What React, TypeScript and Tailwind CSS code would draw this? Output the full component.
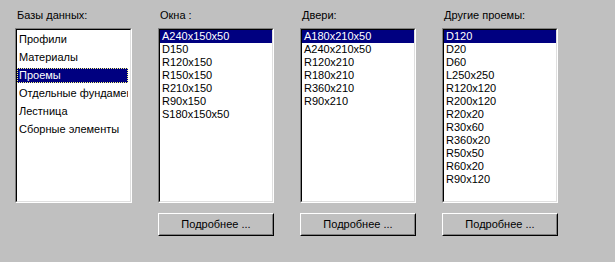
const databases = [
  "Профили",
  "Материалы",
  "Проемы",
  "Отдельные фундаменты",
  "Лестница",
  "Сборные элементы",
];

const windows = ["A240x150x50", "D150", "R120x150", "R150x150", "R210x150", "R90x150", "S180x150x50"];
const doors = ["A180x210x50", "A240x210x50", "R120x210", "R180x210", "R360x210", "R90x210"];
const others = [
  "D120",
  "D20",
  "D60",
  "L250x250",
  "R120x120",
  "R200x120",
  "R20x20",
  "R30x60",
  "R360x20",
  "R50x50",
  "R60x20",
  "R90x120",
];

function ListBox({ children }: { children: React.ReactNode }) {
  // sunken win95 frame
  return (
    <div className="h-[175px] w-full border border-t-[#808080] border-l-[#808080] border-r-white border-b-white">
      <div className="h-full w-full overflow-hidden border border-t-black border-l-black border-r-[#dfdfdf] border-b-[#dfdfdf] bg-white">
        {children}
      </div>
    </div>
  );
}

function Button() {
  return (
    <div className="mt-[10px] h-[23px] w-full border border-t-white border-l-white border-r-black border-b-black">
      <div className="flex h-full w-full items-center justify-center border border-t-[#c0c0c0] border-l-[#c0c0c0] border-r-[#808080] border-b-[#808080] text-black">
        Подробнее ...
      </div>
    </div>
  );
}

function Column({
  label,
  items,
  withButton = true,
}: {
  label: string;
  items: string[];
  withButton?: boolean;
}) {
  return (
    <div className="flex w-[116px] shrink-0 flex-col">
      <div className="h-[13px] pl-[2px] leading-[13px]">{label}</div>
      <div className="mt-[6px]">
        <ListBox>
          {items.map((it, i) => (
            <div
              key={it}
              className={
                i === 0
                  ? "h-[13px] whitespace-nowrap bg-[#000080] pl-[2px] leading-[13px] text-white"
                  : "h-[13px] whitespace-nowrap pl-[2px] leading-[13px]"
              }
            >
              {it}
            </div>
          ))}
        </ListBox>
      </div>
      {withButton && <Button />}
    </div>
  );
}

export default function App() {
  return (
    <div
      className="flex h-[262px] w-[615px] gap-[26px] bg-[#c0c0c0] pl-[15px] pt-[9px] text-[11px] text-black"
      style={{ fontFamily: '"Liberation Sans", Arial, sans-serif' }}
    >
      <div className="flex w-[117px] shrink-0 flex-col">
        <div className="h-[13px] pl-[2px] leading-[13px]">Базы данных:</div>
        <div className="mt-[6px]">
          <ListBox>
            <div className="pt-[2px] pr-[2px]">
              {databases.map((it) => (
                <div key={it} className="h-[18px]">
                  <div
                    className={
                      it === "Проемы"
                        ? "h-[15px] overflow-hidden whitespace-nowrap border border-dotted border-[#ffff80] bg-[#000080] pl-[1px] leading-[13px] text-white"
                        : "h-[15px] overflow-hidden whitespace-nowrap pl-[2px] leading-[15px]"
                    }
                  >
                    {it}
                  </div>
                </div>
              ))}
            </div>
          </ListBox>
        </div>
      </div>
      <Column label="Окна :" items={windows} />
      <Column label="Двери:" items={doors} />
      <Column label="Другие проемы:" items={others} />
    </div>
  );
}
